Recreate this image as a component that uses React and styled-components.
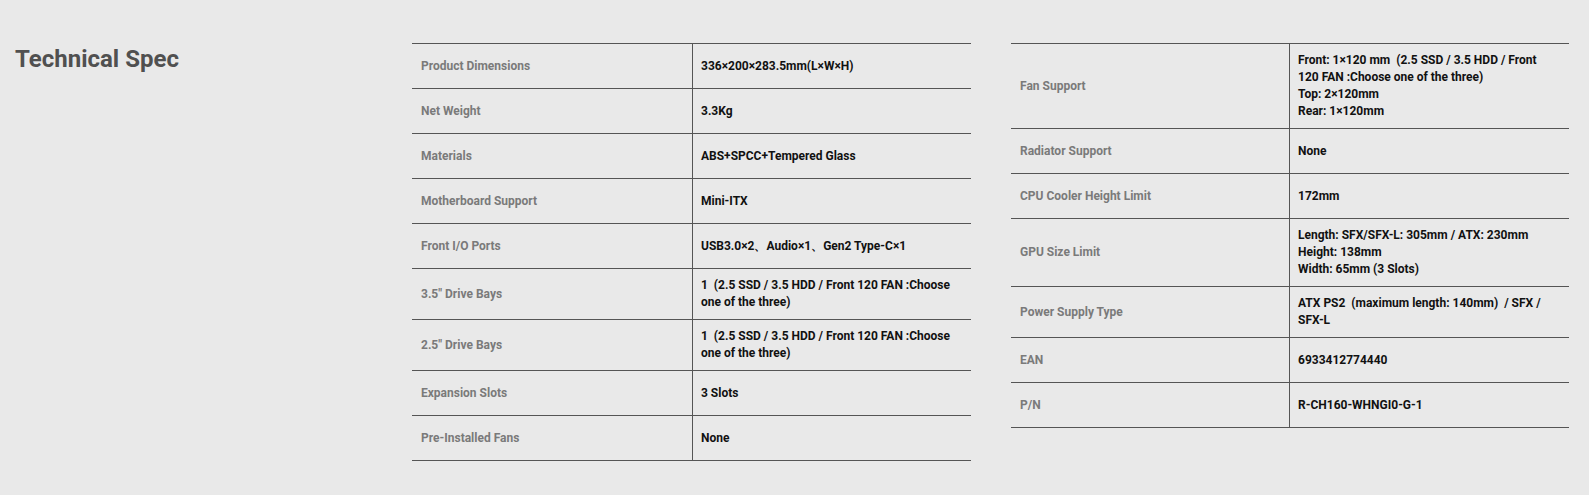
import styled, { createGlobalStyle } from "styled-components";

const GlobalStyle = createGlobalStyle`
  html, body {
    margin: 0;
    padding: 0;
    background: #e9e9e9;
  }
  body {
    font-family: Roboto, "Liberation Sans", Arial, sans-serif;
  }
`;

const Section = styled.section`
  display: grid;
  grid-template-columns: 358px 559px 558px;
  column-gap: 40px;
  align-items: start;
  padding: 43px 0 0 14px;
  min-height: 495px;
  box-sizing: border-box;
`;

const Title = styled.h2`
  margin: 2px 0 0 1px;
  font-size: 24px;
  font-weight: 700;
  color: #505050;
  line-height: 28px;
`;

const Table = styled.div`
  border-top: 1px solid #555;
`;

const Row = styled.div`
  display: grid;
  grid-template-columns: ${({ $labelWidth }) => $labelWidth}px 1fr;
  border-bottom: 1px solid #555;
`;

const Cell = styled.div`
  display: flex;
  align-items: center;
  min-height: 44px;
  box-sizing: border-box;
  padding: 8px ${({ $value }) => ($value ? "8px" : "9px")};
  font-size: 12px;
  line-height: 17px;
  font-weight: 700;
  color: ${({ $value }) => ($value ? "#111" : "#7a7a7a")};
  white-space: pre-wrap;
  border-left: ${({ $value }) => ($value ? "1px solid #555" : "none")};
`;

const leftSpecs = [
  ["Product Dimensions", "336×200×283.5mm(L×W×H)"],
  ["Net Weight", "3.3Kg"],
  ["Materials", "ABS+SPCC+Tempered Glass"],
  ["Motherboard Support", "Mini-ITX"],
  ["Front I/O Ports", "USB3.0×2、Audio×1、Gen2 Type-C×1"],
  ["3.5\" Drive Bays", "1  (2.5 SSD / 3.5 HDD / Front 120 FAN :Choose one of the three)"],
  ["2.5\" Drive Bays", "1  (2.5 SSD / 3.5 HDD / Front 120 FAN :Choose one of the three)"],
  ["Expansion Slots", "3 Slots"],
  ["Pre-Installed Fans", "None"],
];

const rightSpecs = [
  [
    "Fan Support",
    "Front: 1×120 mm  (2.5 SSD / 3.5 HDD / Front\n120 FAN :Choose one of the three)\nTop: 2×120mm\nRear: 1×120mm",
  ],
  ["Radiator Support", "None"],
  ["CPU Cooler Height Limit", "172mm"],
  [
    "GPU Size Limit",
    "Length: SFX/SFX-L: 305mm / ATX: 230mm\nHeight: 138mm\nWidth: 65mm (3 Slots)",
  ],
  ["Power Supply Type", "ATX PS2  (maximum length: 140mm)  / SFX /\nSFX-L"],
  ["EAN", "6933412774440"],
  ["P/N", "R-CH160-WHNGI0-G-1"],
];

function SpecTable({ specs, labelWidth }) {
  return (
    <Table>
      {specs.map(([label, value]) => (
        <Row key={label} $labelWidth={labelWidth}>
          <Cell>{label}</Cell>
          <Cell $value>{value}</Cell>
        </Row>
      ))}
    </Table>
  );
}

export default function App() {
  return (
    <>
      <GlobalStyle />
      <Section>
        <Title>Technical Spec</Title>
        <SpecTable specs={leftSpecs} labelWidth={280} />
        <SpecTable specs={rightSpecs} labelWidth={278} />
      </Section>
    </>
  );
}
